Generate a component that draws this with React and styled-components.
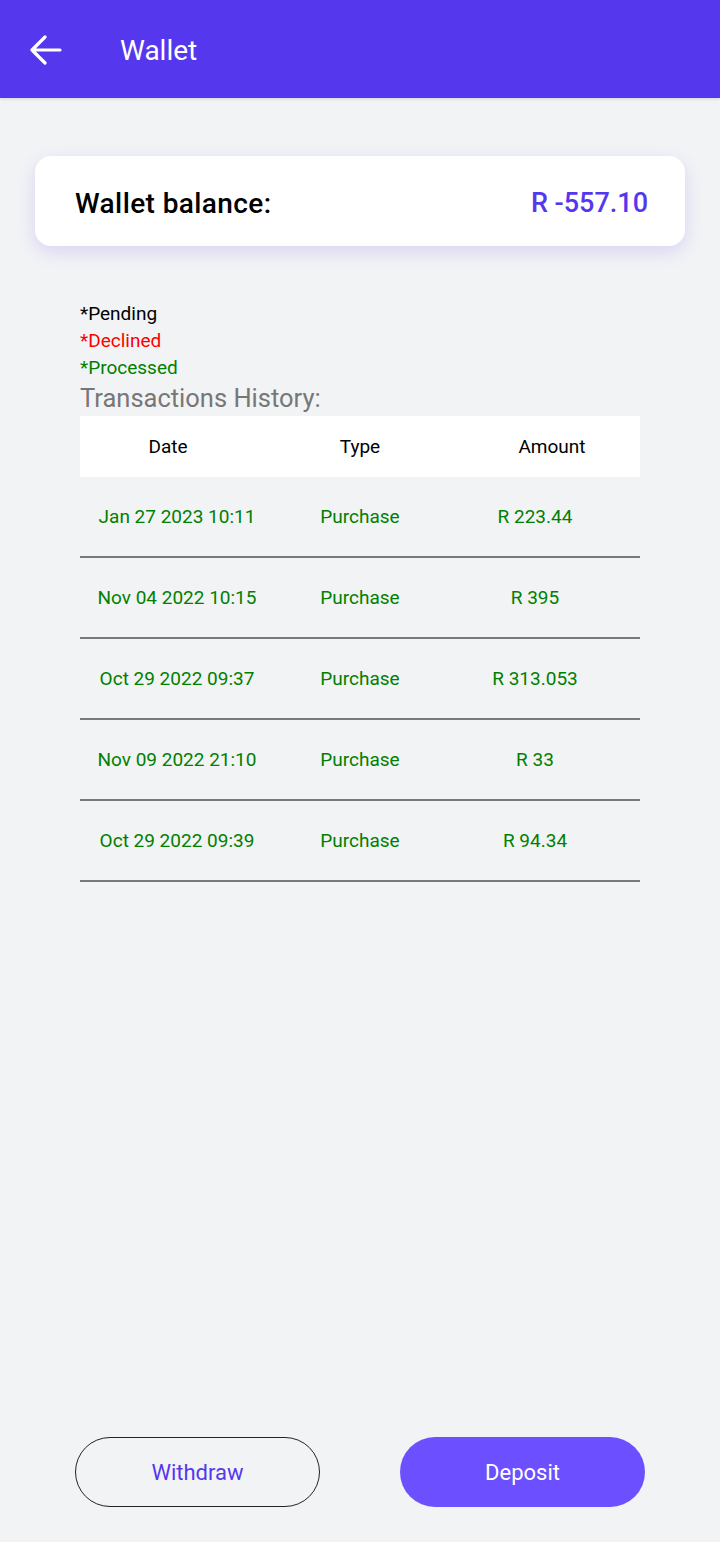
import React from "react";
import styled, { createGlobalStyle } from "styled-components";

const Global = createGlobalStyle`
  html, body { margin: 0; padding: 0; }
  body { background: #f2f3f5; font-family: Roboto, "Noto Sans", sans-serif; }
  * { box-sizing: border-box; }
`;

const Page = styled.div`
  min-height: 1542px;
  display: flex;
  flex-direction: column;
  background: #f2f3f5;
`;

const Header = styled.header`
  height: 98px;
  background: #5538ee;
  display: flex;
  align-items: center;
  padding-left: 29px;
  padding-top: 2px;
  gap: 58px;
  box-shadow: 0 1px 3px rgba(0,0,0,0.12);
`;

const BackButton = styled.button`
  border: 0;
  background: transparent;
  padding: 0;
  width: 33px;
  height: 30px;
  display: flex;
  align-items: center;
  cursor: pointer;
`;

const Title = styled.h1`
  margin: 0;
  color: #fff;
  font-size: 28px;
  font-weight: 400;
`;

const Content = styled.main`
  padding: 58px 35px 0;
  display: flex;
  flex-direction: column;
`;

const BalanceCard = styled.section`
  height: 90px;
  background: #fff;
  border-radius: 16px;
  box-shadow: 0 6px 18px rgba(85, 57, 238, 0.16);
  display: flex;
  align-items: center;
  justify-content: space-between;
  padding: 4px 37px 0 40px;
`;

const BalanceLabel = styled.span`
  font-size: 28px;
  font-weight: 500;
  letter-spacing: 0.4px;
  color: #000;
`;

const BalanceValue = styled.span`
  font-size: 27px;
  font-weight: 500;
  color: #5538ee;
`;

const Details = styled.div`
  padding: 54px 45px 0;
  display: flex;
  flex-direction: column;
`;

const Legend = styled.div`
  font-size: 19px;
  line-height: 27px;
  color: ${(p) => p.$color};
`;

const SectionTitle = styled.h2`
  margin: 0;
  font-size: 25.5px;
  line-height: 35px;
  font-weight: 400;
  color: #777;
`;

const HeadRow = styled.div`
  height: 61px;
  background: #fff;
  display: grid;
  grid-template-columns: 176px 208px 176px;
  align-items: center;
  justify-items: center;
  font-size: 19px;
  color: #000;
`;

const Row = styled.div`
  height: 81px;
  border-bottom: 2px solid #777a7c;
  display: grid;
  grid-template-columns: 194px 172px 178px;
  align-items: center;
  justify-items: center;
  font-size: 19px;
  color: #008000;
`;

const Footer = styled.footer`
  margin-top: auto;
  display: flex;
  justify-content: space-between;
  padding: 0 75px 35px;
`;

const PillButton = styled.button`
  width: 245px;
  height: 70px;
  border-radius: 35px;
  font-family: inherit;
  font-size: 22px;
  cursor: pointer;
  border: ${(p) => (p.$filled ? "0" : "1px solid #222")};
  background: ${(p) => (p.$filled ? "#6c50ff" : "transparent")};
  color: ${(p) => (p.$filled ? "#fff" : "#5538ee")};
`;

const transactions = [
  { date: "Jan 27 2023 10:11", type: "Purchase", amount: "R 223.44" },
  { date: "Nov 04 2022 10:15", type: "Purchase", amount: "R 395" },
  { date: "Oct 29 2022 09:37", type: "Purchase", amount: "R 313.053" },
  { date: "Nov 09 2022 21:10", type: "Purchase", amount: "R 33" },
  { date: "Oct 29 2022 09:39", type: "Purchase", amount: "R 94.34" },
];

export default function App() {
  return (
    <Page>
      <Global />
      <Header>
        <BackButton aria-label="Back">
          <svg width="33" height="30" viewBox="0 0 33 30" fill="none">
            <path d="M3 15H31M16 2L3 15L16 28" stroke="#fff" strokeWidth="3.2" strokeLinecap="round" strokeLinejoin="round" />
          </svg>
        </BackButton>
        <Title>Wallet</Title>
      </Header>
      <Content>
        <BalanceCard>
          <BalanceLabel>Wallet balance:</BalanceLabel>
          <BalanceValue>R -557.10</BalanceValue>
        </BalanceCard>
        <Details>
          <Legend $color="#000">*Pending</Legend>
          <Legend $color="#ff0000">*Declined</Legend>
          <Legend $color="#008000">*Processed</Legend>
          <SectionTitle>Transactions History:</SectionTitle>
          <HeadRow>
            <span>Date</span>
            <span>Type</span>
            <span>Amount</span>
          </HeadRow>
          {transactions.map((t, i) => (
            <Row key={i}>
              <span>{t.date}</span>
              <span>{t.type}</span>
              <span>{t.amount}</span>
            </Row>
          ))}
        </Details>
      </Content>
      <Footer>
        <PillButton>Withdraw</PillButton>
        <PillButton $filled>Deposit</PillButton>
      </Footer>
    </Page>
  );
}
